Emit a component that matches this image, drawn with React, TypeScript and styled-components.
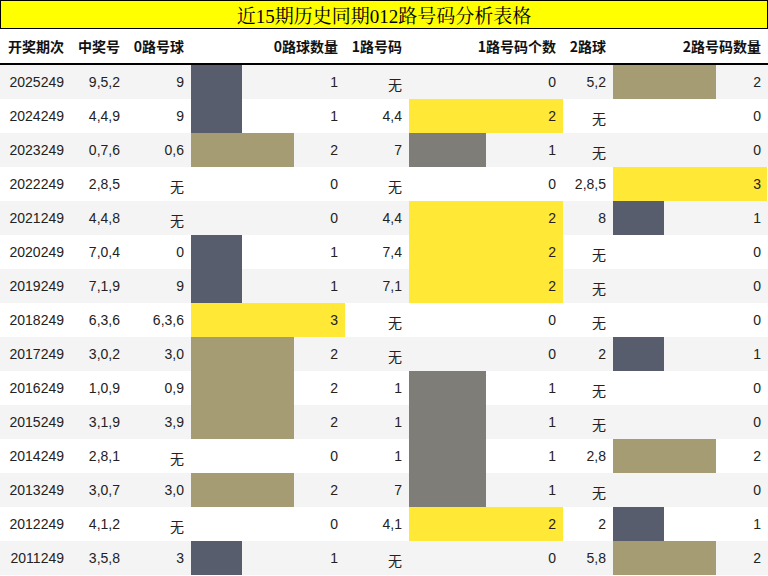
import React from "react";
import styled, { createGlobalStyle } from "styled-components";

const Global = createGlobalStyle`
  html, body { margin: 0; padding: 0; background: #ffffff; }
  body { width: 768px; font-family: "Liberation Sans", "Noto Sans CJK SC", sans-serif; }
`;

const COLS = "71px 56px 64px 154px 64px 154px 50px 155px";

const Page = styled.div`
  width: 768px;
  display: flex;
  flex-direction: column;
`;

const Title = styled.div`
  height: 29px;
  box-sizing: border-box;
  border: 1px solid #000;
  background: #ffff00;
  display: flex;
  align-items: center;
  justify-content: center;
  font-family: "Liberation Serif", "Noto Serif CJK SC", "Noto Sans CJK SC", serif;
  font-size: 19px;
  color: #000;
`;

const HeaderRow = styled.div`
  display: grid;
  grid-template-columns: ${COLS};
  height: 36px;
  box-sizing: border-box;
  border-bottom: 2px solid #000;
`;

const HeadCell = styled.div`
  display: flex;
  align-items: center;
  justify-content: flex-end;
  padding-right: 7px;
  font-family: "Noto Sans CJK SC", sans-serif;
  font-weight: 700;
  font-size: 14px;
  color: #111;
  white-space: nowrap;
`;

const Row = styled.div<{ $alt: boolean }>`
  display: grid;
  grid-template-columns: ${COLS};
  height: 34px;
  background: ${(p) => (p.$alt ? "#f4f4f4" : "#ffffff")};
`;

const Cell = styled.div`
  position: relative;
  display: flex;
  align-items: center;
  justify-content: flex-end;
  padding-right: 7px;
  font-size: 14px;
  color: #222;
  white-space: nowrap;
`;

const CellText = styled.span<{ $cjk?: boolean }>`
  position: relative;
  font-family: ${(p) => (p.$cjk ? '"Noto Sans CJK SC", sans-serif' : '"Liberation Sans", sans-serif')};
  ${(p) => (p.$cjk ? "padding-top: 3px;" : "")}
`;

const Bar = styled.div<{ $color: string }>`
  position: absolute;
  left: 0;
  top: 0;
  bottom: 0;
  background: ${(p) => p.$color};
`;

const SLATE = "#585d6d";
const KHAKI = "#a59c74";
const YELLOW = "#ffe936";
const GRAY = "#7f7d78";

const color0: Record<number, string> = { 1: SLATE, 2: KHAKI, 3: YELLOW };
const color1: Record<number, string> = { 1: GRAY, 2: YELLOW };
const color2: Record<number, string> = { 1: SLATE, 2: KHAKI, 3: YELLOW };

type R = [string, string, string, number, string, number, string, number];

const data: R[] = [
  ["2025249", "9,5,2", "9", 1, "无", 0, "5,2", 2],
  ["2024249", "4,4,9", "9", 1, "4,4", 2, "无", 0],
  ["2023249", "0,7,6", "0,6", 2, "7", 1, "无", 0],
  ["2022249", "2,8,5", "无", 0, "无", 0, "2,8,5", 3],
  ["2021249", "4,4,8", "无", 0, "4,4", 2, "8", 1],
  ["2020249", "7,0,4", "0", 1, "7,4", 2, "无", 0],
  ["2019249", "7,1,9", "9", 1, "7,1", 2, "无", 0],
  ["2018249", "6,3,6", "6,3,6", 3, "无", 0, "无", 0],
  ["2017249", "3,0,2", "3,0", 2, "无", 0, "2", 1],
  ["2016249", "1,0,9", "0,9", 2, "1", 1, "无", 0],
  ["2015249", "3,1,9", "3,9", 2, "1", 1, "无", 0],
  ["2014249", "2,8,1", "无", 0, "1", 1, "2,8", 2],
  ["2013249", "3,0,7", "3,0", 2, "7", 1, "无", 0],
  ["2012249", "4,1,2", "无", 0, "4,1", 2, "2", 1],
  ["2011249", "3,5,8", "3", 1, "无", 0, "5,8", 2],
];

const headers = ["开奖期次", "中奖号", "0路号球", "0路球数量", "1路号码", "1路号码个数", "2路球", "2路号码数量"];

const max0 = Math.max(...data.map((r) => r[3]));
const max1 = Math.max(...data.map((r) => r[5]));
const max2 = Math.max(...data.map((r) => r[7]));

const TextCell: React.FC<{ v: string }> = ({ v }) => (
  <Cell>
    <CellText $cjk={v === "无"}>{v}</CellText>
  </Cell>
);

const BarCell: React.FC<{ n: number; max: number; colors: Record<number, string> }> = ({ n, max, colors }) => (
  <Cell>
    {n > 0 && <Bar $color={colors[n]} style={{ width: `${(n / max) * 154}px` }} />}
    <CellText>{n}</CellText>
  </Cell>
);

export default function App() {
  return (
    <Page>
      <Global />
      <Title>近15期历史同期012路号码分析表格</Title>
      <HeaderRow>
        {headers.map((h) => (
          <HeadCell key={h}>{h}</HeadCell>
        ))}
      </HeaderRow>
      {data.map((r, i) => (
        <Row key={r[0]} $alt={i % 2 === 0}>
          <TextCell v={r[0]} />
          <TextCell v={r[1]} />
          <TextCell v={r[2]} />
          <BarCell n={r[3]} max={max0} colors={color0} />
          <TextCell v={r[4]} />
          <BarCell n={r[5]} max={max1} colors={color1} />
          <TextCell v={r[6]} />
          <BarCell n={r[7]} max={max2} colors={color2} />
        </Row>
      ))}
    </Page>
  );
}
